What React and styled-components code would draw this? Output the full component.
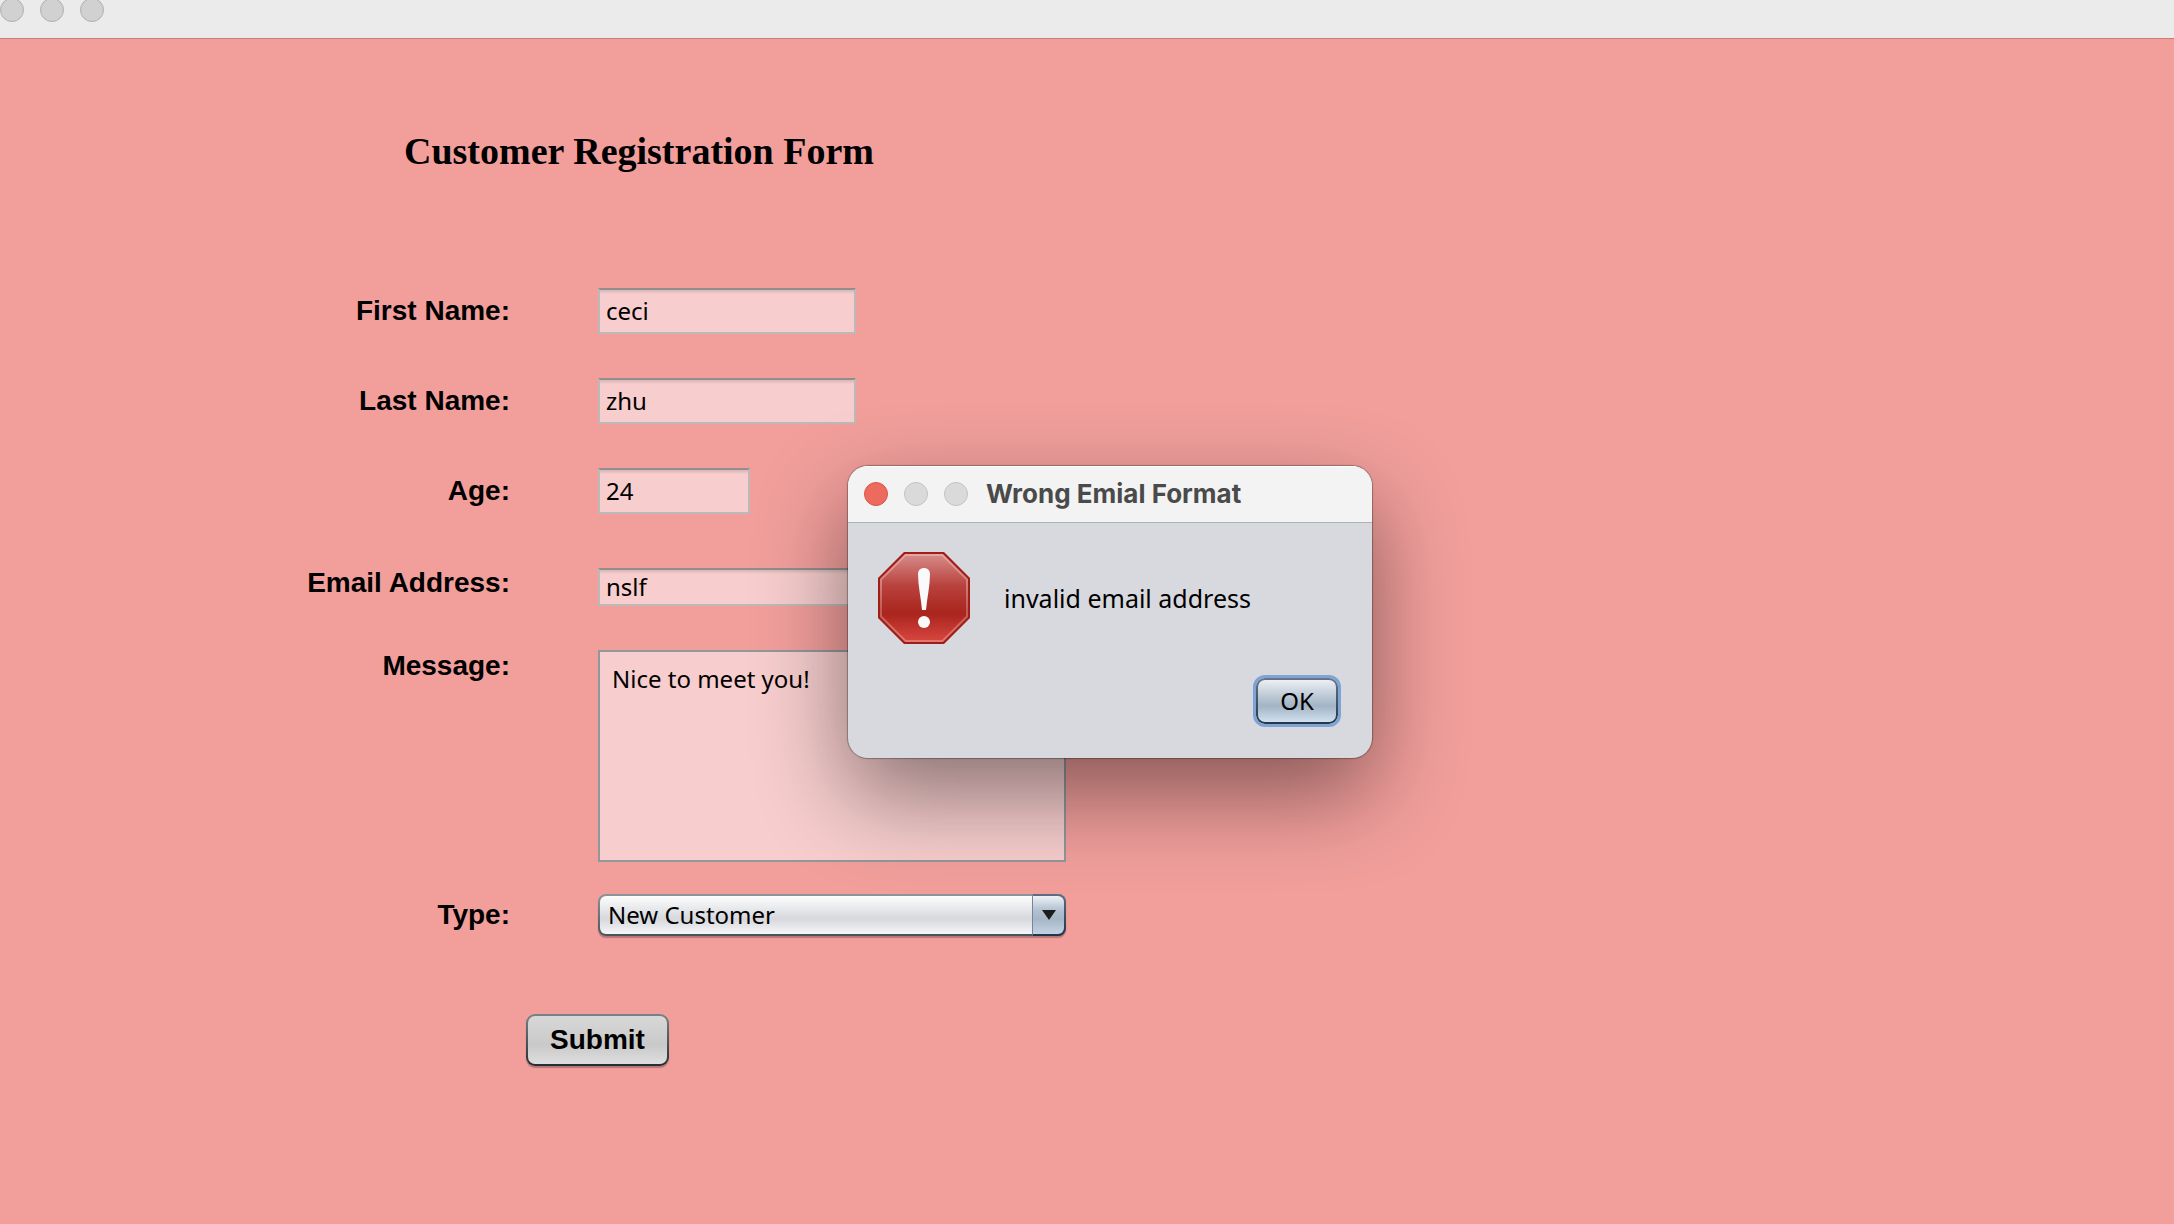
import React from "react";
import styled, { createGlobalStyle } from "styled-components";

const labelFont = '"Liberation Sans", Arial, sans-serif';
const fieldFont = '"Lucida Grande", "Noto Sans", sans-serif';
const titleFont = '"Lucida Blackletter", "Liberation Serif", serif';

const GlobalStyle = createGlobalStyle`
  *, *::before, *::after { box-sizing: border-box; }
  body {
    margin: 0;
    min-height: 100vh;
    background: #f29f9c;
    color: #000;
    font-family: ${fieldFont};
  }
`;

const TitleBar = styled.header`
  display: flex;
  align-items: flex-start;
  gap: 16px;
  height: 39px;
  overflow: hidden;
  background: #ebebeb;
  border-bottom: 1px solid #cb7a77;
`;

const WindowButton = styled.button`
  width: 24px;
  height: 24px;
  padding: 0;
  border: 1px solid ${(p) => p.$edge || "#b0b0b0"};
  border-radius: 50%;
  background: ${(p) => p.$fill || "#d1d1d1"};
  flex: none;
`;

const BarButtons = styled.div`
  display: flex;
  gap: 16px;
  margin-top: ${(p) => p.$top || "0"};
`;

const Page = styled.main`
  padding: 88px 0 80px;
`;

const Heading = styled.h1`
  margin: 0 0 113px 404px;
  font: bold 38px/48px ${titleFont};
`;

const Row = styled.div`
  display: grid;
  grid-template-columns: 510px 468px;
  column-gap: 88px;
  align-items: center;
  min-height: 42px;
  margin-bottom: ${(p) => p.$after || "44px"};
`;

const Label = styled.label`
  justify-self: end;
  align-self: ${(p) => p.$align || "center"};
  font: bold 28px/32px ${labelFont};
`;

const TextField = styled.input`
  width: ${(p) => p.$width || "100%"};
  height: ${(p) => p.$height || "46px"};
  padding: 0 6px 2px;
  border: 2px solid #bcb9b9;
  border-top-color: #8f8f90;
  border-radius: 0;
  outline: 0;
  background: linear-gradient(#d9b5b4, #f7cdcd 4px);
  color: #000;
  font: 24px/32px ${fieldFont};
`;

const EmailCell = styled.div`
  display: flex;
  align-items: flex-end;
  height: 46px;
`;

const MessageField = styled.textarea`
  display: block;
  width: 100%;
  height: 212px;
  padding: 11px 12px;
  border: 2px solid #90979d;
  border-radius: 0;
  outline: 0;
  resize: none;
  background: #f7cdcd;
  color: #000;
  font: 24px/32px ${fieldFont};
`;

const SelectBox = styled.div`
  position: relative;
  height: 42px;
  border-radius: 8px;
  box-shadow: 0 2px 1px rgba(90, 60, 60, 0.4);
`;

const Select = styled.select`
  appearance: none;
  width: 100%;
  height: 42px;
  padding: 0 44px 0 8px;
  border: 2px solid transparent;
  border-radius: 8px;
  outline: 0;
  background:
    linear-gradient(#fdfdfe, #d6d8dc 60%, #f5f6f9) padding-box,
    linear-gradient(#8e959c, #4c5258) border-box;
  color: #000;
  font: 24px/32px ${fieldFont};
`;

const SelectArrow = styled.span`
  position: absolute;
  top: 0;
  right: 0;
  display: flex;
  align-items: center;
  justify-content: center;
  width: 34px;
  height: 42px;
  border: 2px solid transparent;
  border-left: 1px solid #74869a;
  border-radius: 0 8px 8px 0;
  background:
    linear-gradient(#eef2f6, #b5c3d3 35%, #a5b6c6 60%, #c3d3e4) padding-box,
    linear-gradient(#5f6f82, #22344a) border-box;
  pointer-events: none;
`;

const SubmitButton = styled.button`
  display: block;
  height: 52px;
  margin: 78px 0 0 526px;
  padding: 0 22px;
  border: 2px solid transparent;
  border-radius: 9px;
  background:
    linear-gradient(#d8d8d8, #c9c9c9 60%, #dedede) padding-box,
    linear-gradient(#7a828a, #242c34) border-box;
  box-shadow: 0 2px 1px rgba(90, 60, 60, 0.4);
  color: #000;
  font: bold 28px/32px ${labelFont};
`;

const Dialog = styled.section`
  position: absolute;
  left: 848px;
  top: 466px;
  width: 524px;
  border-radius: 20px;
  overflow: hidden;
  background: #d8d9de;
  box-shadow: 0 0 1px 1px rgba(0, 0, 0, 0.3), 0 36px 90px rgba(0, 0, 0, 0.45);
`;

const DialogBar = styled.div`
  display: flex;
  align-items: center;
  gap: 18px;
  height: 57px;
  padding: 0 16px;
  background: #f3f3f3;
  border-bottom: 1px solid #adb0b5;
  box-shadow: inset 0 1px #fff;
`;

const DialogTitle = styled.h2`
  margin: 0;
  color: #4a4a4a;
  font: bold 26px/32px Inter, sans-serif;
`;

const DialogBody = styled.div`
  display: flex;
  align-items: center;
  gap: 34px;
  padding: 29px 30px 0;
  font-size: 25px;
  line-height: 32px;
`;

const DialogActions = styled.div`
  display: flex;
  justify-content: flex-end;
  padding: 34px;
`;

const OkButton = styled.button`
  width: 82px;
  height: 46px;
  padding: 0;
  border: 2px solid transparent;
  border-radius: 9px;
  outline: 3px solid #7fa3d2;
  background:
    linear-gradient(#eceff4, #b5c3d1 45%, #a3b4c4 62%, #cfe0ef) padding-box,
    linear-gradient(#66758a, #22364c) border-box;
  color: #000;
  font: 24px/32px ${fieldFont};
`;

function ErrorIcon() {
  return (
    <svg width="92" height="92" viewBox="0 0 92 92" aria-hidden="true">
      <defs>
        <linearGradient id="stop" x1="0" y1="0" x2="0" y2="1">
          <stop offset="0" stopColor="#d58a88" />
          <stop offset="0.36" stopColor="#b9413d" />
          <stop offset="0.68" stopColor="#a9251d" />
          <stop offset="1" stopColor="#d6463f" />
        </linearGradient>
        <linearGradient id="rim" x1="0" y1="0" x2="0" y2="1">
          <stop offset="0" stopColor="#e5a5a3" />
          <stop offset="0.65" stopColor="#bf5a55" />
          <stop offset="1" stopColor="#e27671" />
        </linearGradient>
      </defs>
      <path d="M26 0H66L92 26V66L66 92H26L0 66V26Z" fill="#a11d17" />
      <path d="M27.5 3H64.5L89 27.5V64.5L64.5 89H27.5L3 64.5V27.5Z" fill="url(#stop)" stroke="url(#rim)" strokeWidth="2" />
      <path d="M40 22C40 14 52 14 52 22C52 34 49 46 48 58H44C43 46 40 34 40 22Z" fill="#fafafa" />
      <circle cx="46" cy="70" r="6" fill="#fafafa" />
    </svg>
  );
}

export default function App() {
  return (
    <>
      <GlobalStyle />
      <TitleBar>
        <BarButtons $top="-2px">
          <WindowButton aria-label="Close" />
          <WindowButton aria-label="Minimize" />
          <WindowButton aria-label="Zoom" />
        </BarButtons>
      </TitleBar>
      <Page>
        <Heading>Customer Registration Form</Heading>
        <form onSubmit={(e) => e.preventDefault()}>
          <Row>
            <Label htmlFor="first">First Name:</Label>
            <TextField id="first" $width="258px" defaultValue="ceci" />
          </Row>
          <Row>
            <Label htmlFor="last">Last Name:</Label>
            <TextField id="last" $width="258px" defaultValue="zhu" />
          </Row>
          <Row $after="46px">
            <Label htmlFor="age">Age:</Label>
            <TextField id="age" $width="152px" defaultValue="24" />
          </Row>
          <Row>
            <Label htmlFor="email">Email Address:</Label>
            <EmailCell>
              <TextField id="email" $height="38px" defaultValue="nslf" />
            </EmailCell>
          </Row>
          <Row $after="32px">
            <Label htmlFor="message" $align="start">Message:</Label>
            <MessageField id="message" defaultValue="Nice to meet you!" />
          </Row>
          <Row $after="0">
            <Label htmlFor="type">Type:</Label>
            <SelectBox>
              <Select id="type" defaultValue="new">
                <option value="new">New Customer</option>
              </Select>
              <SelectArrow>
                <svg width="14" height="10" viewBox="0 0 14 10" aria-hidden="true">
                  <path d="M0 0H14L7 10Z" fill="#1c1c1c" />
                </svg>
              </SelectArrow>
            </SelectBox>
          </Row>
          <SubmitButton type="submit">Submit</SubmitButton>
        </form>
      </Page>
      <Dialog role="alertdialog" aria-labelledby="dialog-title">
        <DialogBar>
          <BarButtons>
            <WindowButton aria-label="Close" $fill="#ed6a5e" $edge="#d8564b" />
            <WindowButton aria-label="Minimize" $fill="#dadada" $edge="#c2c2c2" />
            <WindowButton aria-label="Zoom" $fill="#dadada" $edge="#c2c2c2" />
          </BarButtons>
          <DialogTitle id="dialog-title">Wrong Emial Format</DialogTitle>
        </DialogBar>
        <DialogBody>
          <ErrorIcon />
          <span>invalid email address</span>
        </DialogBody>
        <DialogActions>
          <OkButton type="button">OK</OkButton>
        </DialogActions>
      </Dialog>
    </>
  );
}
